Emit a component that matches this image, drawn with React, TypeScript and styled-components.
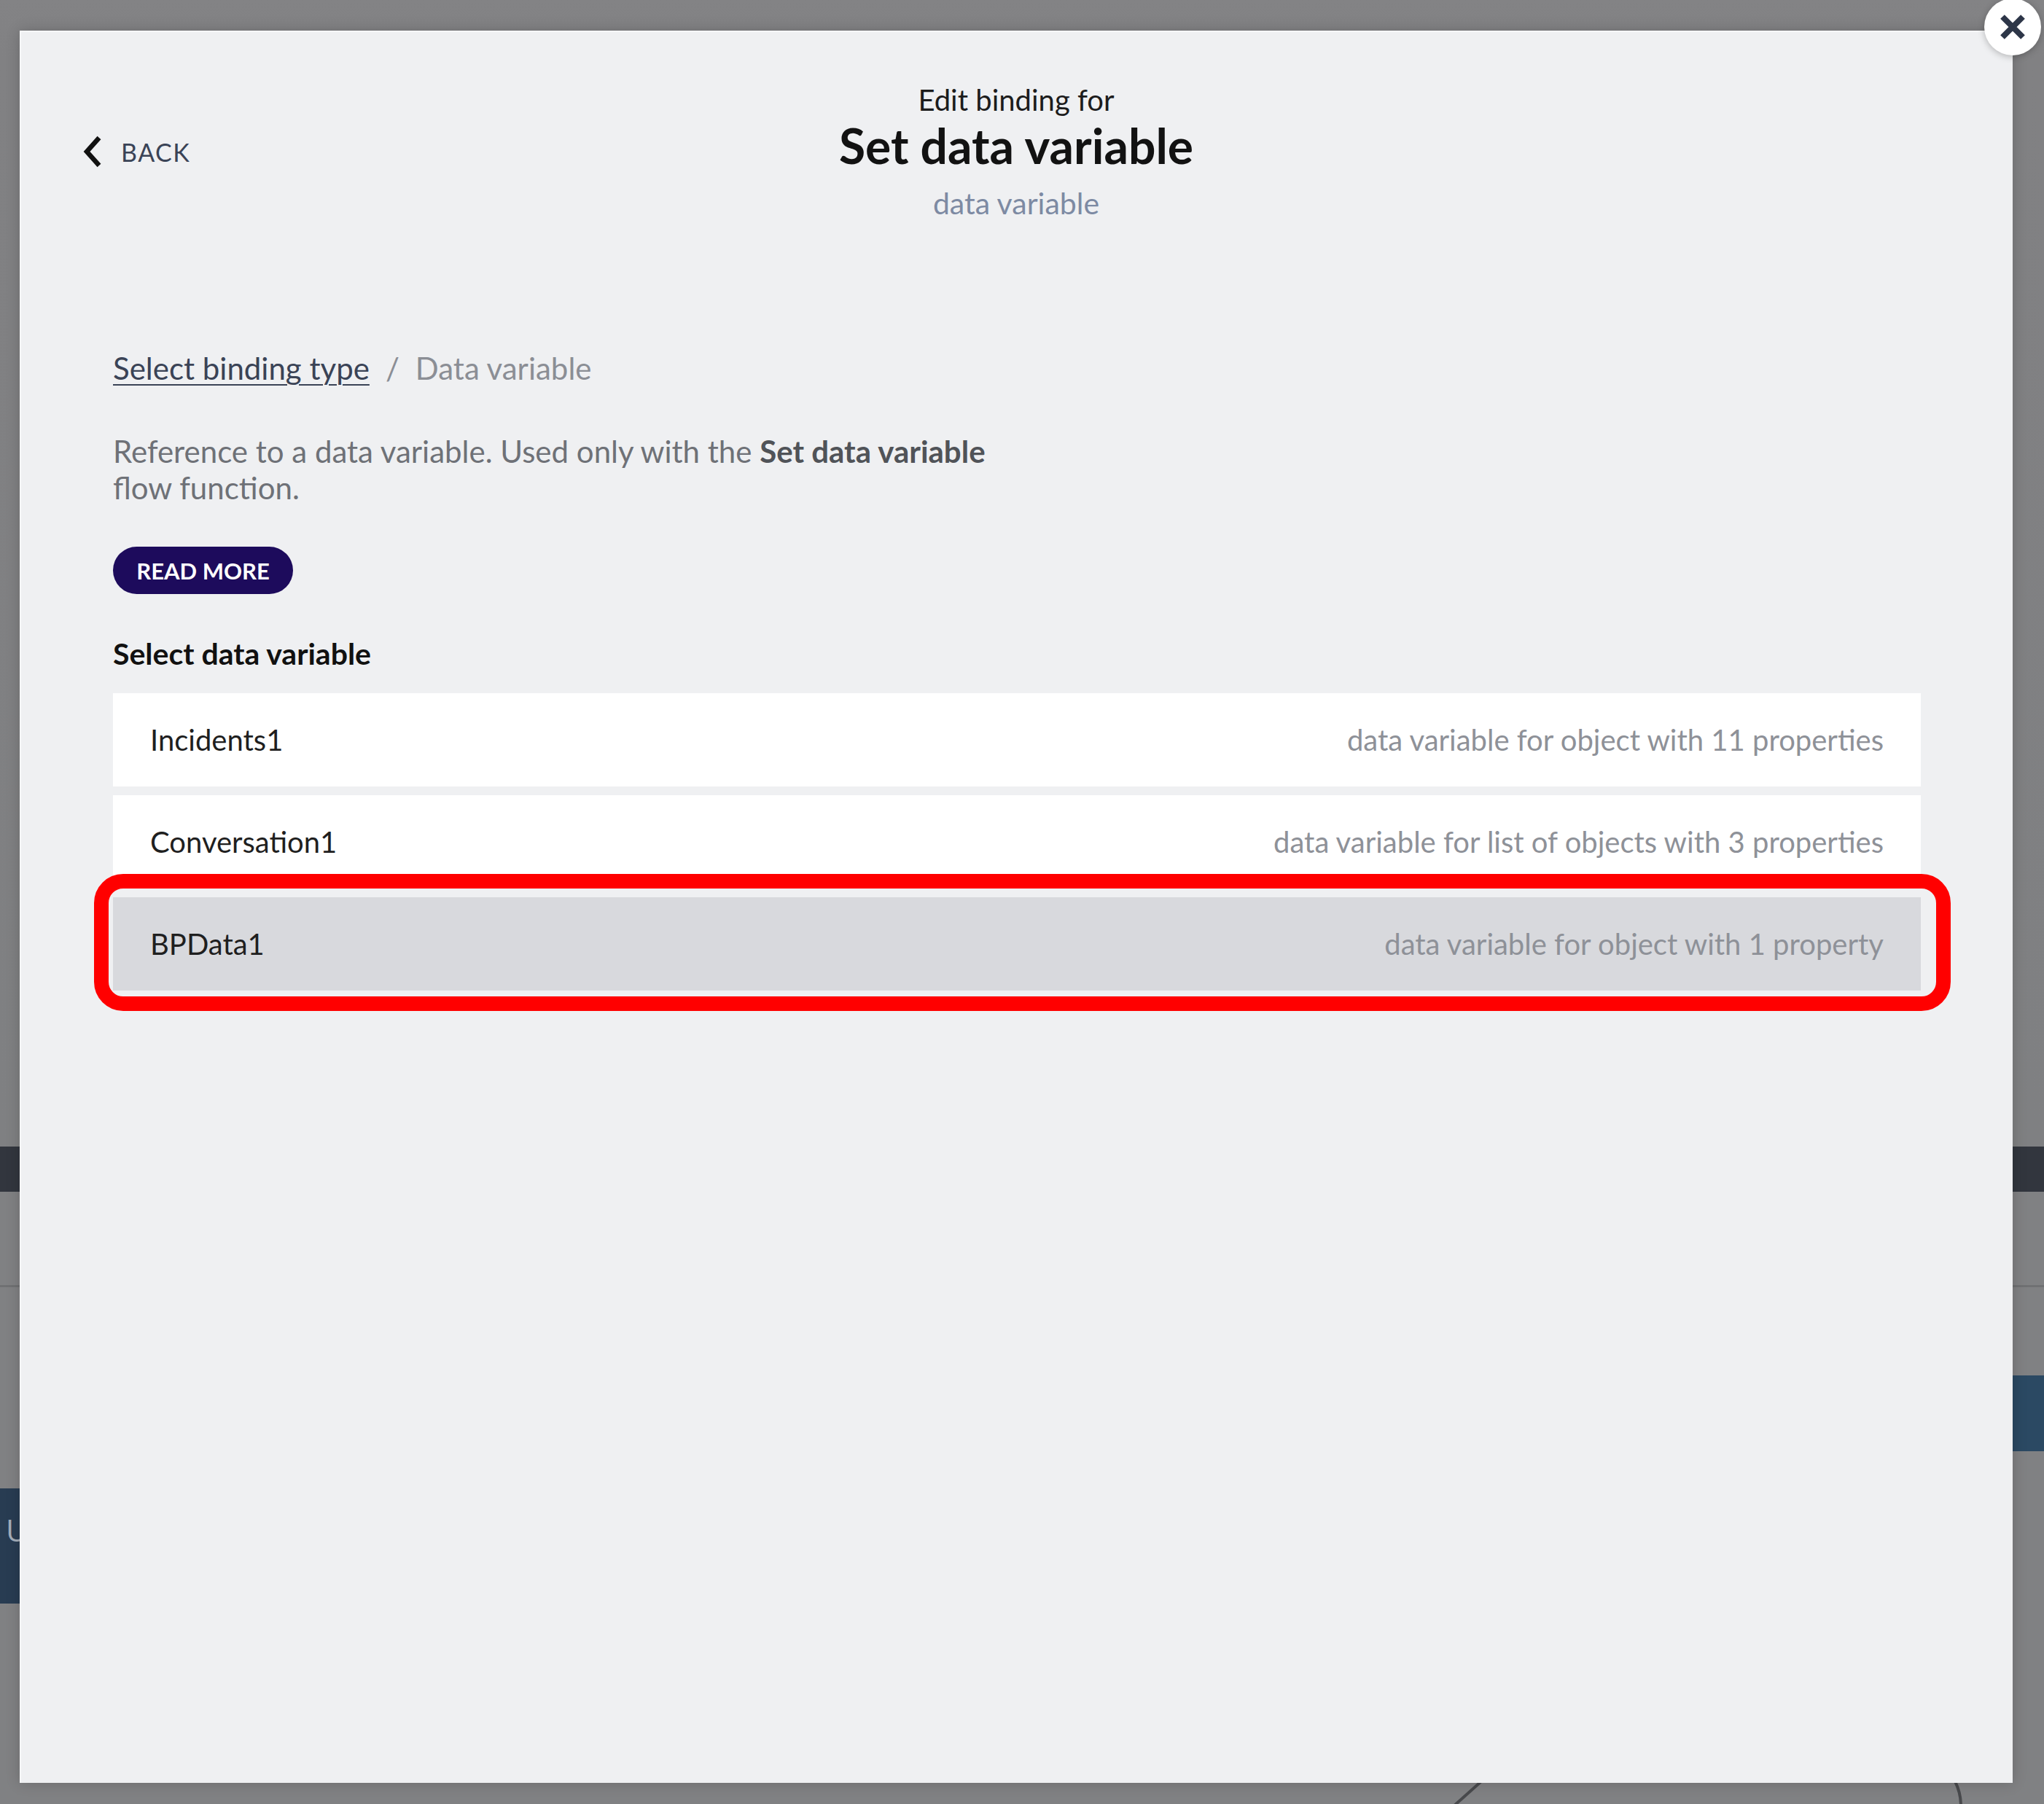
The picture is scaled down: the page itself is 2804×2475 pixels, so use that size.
import React from "react";
import styled, { createGlobalStyle } from "styled-components";

const GlobalStyle = createGlobalStyle`
  html, body {
    margin: 0;
    padding: 0;
    background: #808183;
  }
  * {
    box-sizing: border-box;
  }
`;

const Screen = styled.div`
  position: relative;
  width: 2804px;
  height: 2475px;
  overflow: hidden;
  background: #808183;
  font-family: Lato, "Open Sans", sans-serif;
`;

/* app underneath the overlay */
const Canvas = styled.div`
  display: flex;
  flex-direction: column;
  height: 100%;
`;

const TopZone = styled.div`
  height: 1573px;
  background: linear-gradient(#838385 0, #818183 80px, #7f8082 100%);
`;

const DarkBar = styled.div`
  height: 62px;
  background: #32363e;
`;

const Band = styled.div`
  height: 128px;
`;

const Rule = styled.div`
  height: 3px;
  background: #707173;
`;

const Node = styled.div<{ $side: "left" | "right" }>`
  position: absolute;
  width: 120px;
  color: #a4aeba;
  font-family: "Open Sans", sans-serif;
  font-size: 42px;
  line-height: 1;
  display: flex;
  ${({ $side }) =>
    $side === "left"
      ? `left: 0; top: 2042px; height: 158px; background: #283c52;
         align-items: flex-start; padding: 36px 0 0 8px;`
      : `right: 0; top: 1887px; height: 104px; background: #2b4963;
         align-items: center; padding-left: 2px;`}
`;

const Wires = styled.svg`
  position: absolute;
  left: 0;
  top: 0;
`;

const Modal = styled.div`
  position: absolute;
  left: 27px;
  top: 42px;
  width: 2734px;
  height: 2404px;
  background: #eff0f2;
  border-top: 2px solid #f6f7f8;
  border-left: 2px solid #f6f7f8;
  box-shadow: 0 0 18px rgba(0, 0, 0, 0.18);
  display: flex;
  flex-direction: column;
`;

const CloseButton = styled.button`
  position: absolute;
  left: 2722px;
  top: -2px;
  width: 78px;
  height: 78px;
  border-radius: 50%;
  border: none;
  background: #ffffff;
  box-shadow: 0 2px 10px rgba(0, 0, 0, 0.25);
  display: flex;
  align-items: center;
  justify-content: center;
  padding: 0;
`;

const Header = styled.header`
  display: grid;
  grid-template-columns: 1fr auto 1fr;
  padding: 69px 85px 0 83px;
`;

const BackLink = styled.div`
  display: flex;
  align-items: center;
  gap: 26px;
  margin-top: 72px;
  align-self: start;
  height: 46px;
`;

const BackLabel = styled.span`
  font-size: 34px;
  letter-spacing: 1.5px;
  color: #3a4356;
`;

const TitleBlock = styled.div`
  display: flex;
  flex-direction: column;
  align-items: center;
`;

const Eyebrow = styled.div`
  font-size: 40px;
  line-height: 48px;
  color: #1c1c1c;
`;

const Title = styled.h1`
  margin: 0;
  font-size: 66px;
  line-height: 78px;
  font-weight: 700;
  color: #121212;
`;

const Subtitle = styled.div`
  margin-top: 16px;
  font-size: 41px;
  line-height: 48px;
  color: #7d8aa3;
`;

const Body = styled.section`
  display: flex;
  flex-direction: column;
  align-items: flex-start;
  padding: 173px 126px 0 126px;
`;

const Breadcrumb = styled.nav`
  display: flex;
  align-items: baseline;
  gap: 22px;
  margin-top: 6px;
  font-size: 42px;
  line-height: 46px;
`;

const CrumbLink = styled.a`
  color: #3a4356;
  text-decoration: underline;
  text-underline-offset: 6px;
  text-decoration-thickness: 2px;
`;

const CrumbCurrent = styled.span`
  color: #8b8e95;
`;

const Description = styled.p`
  margin: 66px 0 0;
  max-width: 1280px;
  font-size: 42px;
  line-height: 50px;
  color: #6e7177;

  b {
    color: #505358;
    font-weight: 700;
  }
`;

const ReadMore = styled.button`
  margin-top: 56px;
  height: 65px;
  width: 247px;
  border: none;
  border-radius: 33px;
  background: #1d0b5c;
  color: #ffffff;
  font-family: Lato, sans-serif;
  font-weight: 700;
  font-size: 31px;
  text-transform: uppercase;
  padding: 0;
`;

const SectionLabel = styled.h2`
  margin: 60px 0 0;
  font-size: 41px;
  line-height: 44px;
  font-weight: 700;
  color: #111111;
`;

const VariableList = styled.ul`
  list-style: none;
  margin: 32px 0 0;
  padding: 0;
  align-self: stretch;
  display: flex;
  flex-direction: column;
  gap: 12px;
`;

const VariableRow = styled.li<{ $selected?: boolean }>`
  position: relative;
  height: 128px;
  padding: 0 51px;
  display: flex;
  align-items: center;
  justify-content: space-between;
  background: ${({ $selected }) => ($selected ? "#d8d9dd" : "#ffffff")};
`;

const VariableName = styled.span`
  font-size: 40px;
  color: #1f1f1f;
`;

const VariableKind = styled.span`
  font-size: 40px;
  color: #8e9198;
`;

const Highlight = styled.div`
  position: absolute;
  top: -32px;
  bottom: -28px;
  left: -26px;
  right: -41px;
  border: 20px solid #ff0000;
  border-radius: 40px;
  pointer-events: none;
`;

const variables = [
  { name: "Incidents1", kind: "data variable for object with 11 properties" },
  { name: "Conversation1", kind: "data variable for list of objects with 3 properties" },
  { name: "BPData1", kind: "data variable for object with 1 property", selected: true },
];

export default function App() {
  return (
    <>
      <GlobalStyle />
      <Screen>
        <Canvas>
          <TopZone />
          <DarkBar />
          <Band />
          <Rule />
        </Canvas>
        <Node $side="right">le</Node>
        <Node $side="left">U</Node>
        <Wires width="2804" height="2475">
          <path d="M2032 2444 L1994 2478" stroke="#48494c" strokeWidth="4" fill="none" />
          <path d="M2682 2444 Q2690 2460 2690 2478" stroke="#48494c" strokeWidth="4" fill="none" />
        </Wires>

        <Modal>
          <Header>
            <BackLink>
              <svg width="28" height="46" viewBox="0 0 28 46">
                <path d="M24 4 L7 23 L24 42" stroke="#111" strokeWidth="6.5" fill="none" />
              </svg>
              <BackLabel>BACK</BackLabel>
            </BackLink>
            <TitleBlock>
              <Eyebrow>Edit binding for</Eyebrow>
              <Title>Set data variable</Title>
              <Subtitle>data variable</Subtitle>
            </TitleBlock>
            <div />
          </Header>

          <Body>
            <Breadcrumb>
              <CrumbLink>Select binding type</CrumbLink>
              <CrumbCurrent>/</CrumbCurrent>
              <CrumbCurrent>Data variable</CrumbCurrent>
            </Breadcrumb>
            <Description>
              Reference to a data variable. Used only with the <b>Set data variable</b> flow function.
            </Description>
            <ReadMore>Read more</ReadMore>
            <SectionLabel>Select data variable</SectionLabel>
            <VariableList>
              {variables.map((v) => (
                <VariableRow key={v.name} $selected={v.selected}>
                  <VariableName>{v.name}</VariableName>
                  <VariableKind>{v.kind}</VariableKind>
                  {v.selected && <Highlight />}
                </VariableRow>
              ))}
            </VariableList>
          </Body>
        </Modal>

        <CloseButton aria-label="Close">
          <svg width="40" height="40" viewBox="0 0 40 40">
            <path d="M6 6 L34 34 M34 6 L6 34" stroke="#2d3648" strokeWidth="8" fill="none" />
          </svg>
        </CloseButton>
      </Screen>
    </>
  );
}
